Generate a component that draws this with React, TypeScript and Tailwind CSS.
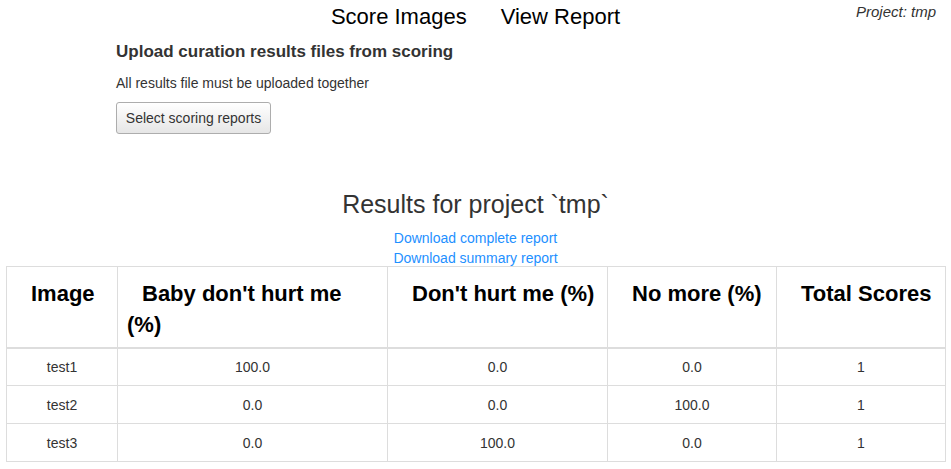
import React from "react";

const rows = [
  ["test1", "100.0", "0.0", "0.0", "1"],
  ["test2", "0.0", "0.0", "100.0", "1"],
  ["test3", "0.0", "100.0", "0.0", "1"],
];

const headers = ["Image", "Baby don't hurt me (%)", "Don't hurt me (%)", "No more (%)", "Total Scores"];

export default function App() {
  return (
    <div className="w-[951px] h-[469px] overflow-hidden bg-white text-[#333]" style={{ fontFamily: '"Liberation Sans", Arial, sans-serif' }}>
      <div className="grid grid-cols-[1fr_auto_1fr] items-start">
        <div />
        <nav className="flex gap-[34px] text-[22px] leading-[33px] text-black">
          <span>Score Images</span>
          <span>View Report</span>
        </nav>
        <div className="flex justify-end pr-[15px] text-[15px] leading-[24px] italic text-[#333]">Project: tmp</div>
      </div>

      <div className="ml-[116px] mt-[6px]">
        <h3 className="text-[17px] leading-[26px] font-bold text-[#333]">Upload curation results files from scoring</h3>
        <p className="mt-[8px] text-[14px] leading-[20px] text-[#333]">All results file must be uploaded together</p>
        <button className="mt-[9px] h-[32px] w-[155px] rounded-[3px] border border-[#adadad] bg-gradient-to-b from-[#ffffff] to-[#e6e6e6] text-[14px] text-[#333]">
          Select scoring reports
        </button>
      </div>

      <h2 className="mt-[52px] text-center text-[25px] leading-[36px] text-[#333]">Results for project `tmp`</h2>
      <div className="mt-[6px] flex flex-col items-center text-[14px] leading-[20px] text-[#1e90ff]">
        <a>Download complete report</a>
        <a>Download summary report</a>
      </div>

      <table className="ml-[6px] mt-[-2px] w-[939px] table-fixed border-collapse">
        <colgroup>
          <col className="w-[111px]" />
          <col className="w-[270px]" />
          <col className="w-[220px]" />
          <col className="w-[169px]" />
          <col className="w-[169px]" />
        </colgroup>
        <thead>
          <tr>
            {headers.map((h, i) => (
              <th
                key={i}
                className="h-[81px] border border-b-2 border-[#ddd] pl-[9px] pr-[8px] pt-[11px] pb-[6px] text-left align-top text-[22px] leading-[31px] font-bold text-black indent-[15px]"
              >
                {h}
              </th>
            ))}
          </tr>
        </thead>
        <tbody>
          {rows.map((r, i) => (
            <tr key={i}>
              {r.map((c, j) => (
                <td key={j} className="h-[38px] border border-[#ddd] px-[8px] pt-[2px] text-center align-middle text-[14px] text-[#333]">
                  {c}
                </td>
              ))}
            </tr>
          ))}
        </tbody>
      </table>
    </div>
  );
}
